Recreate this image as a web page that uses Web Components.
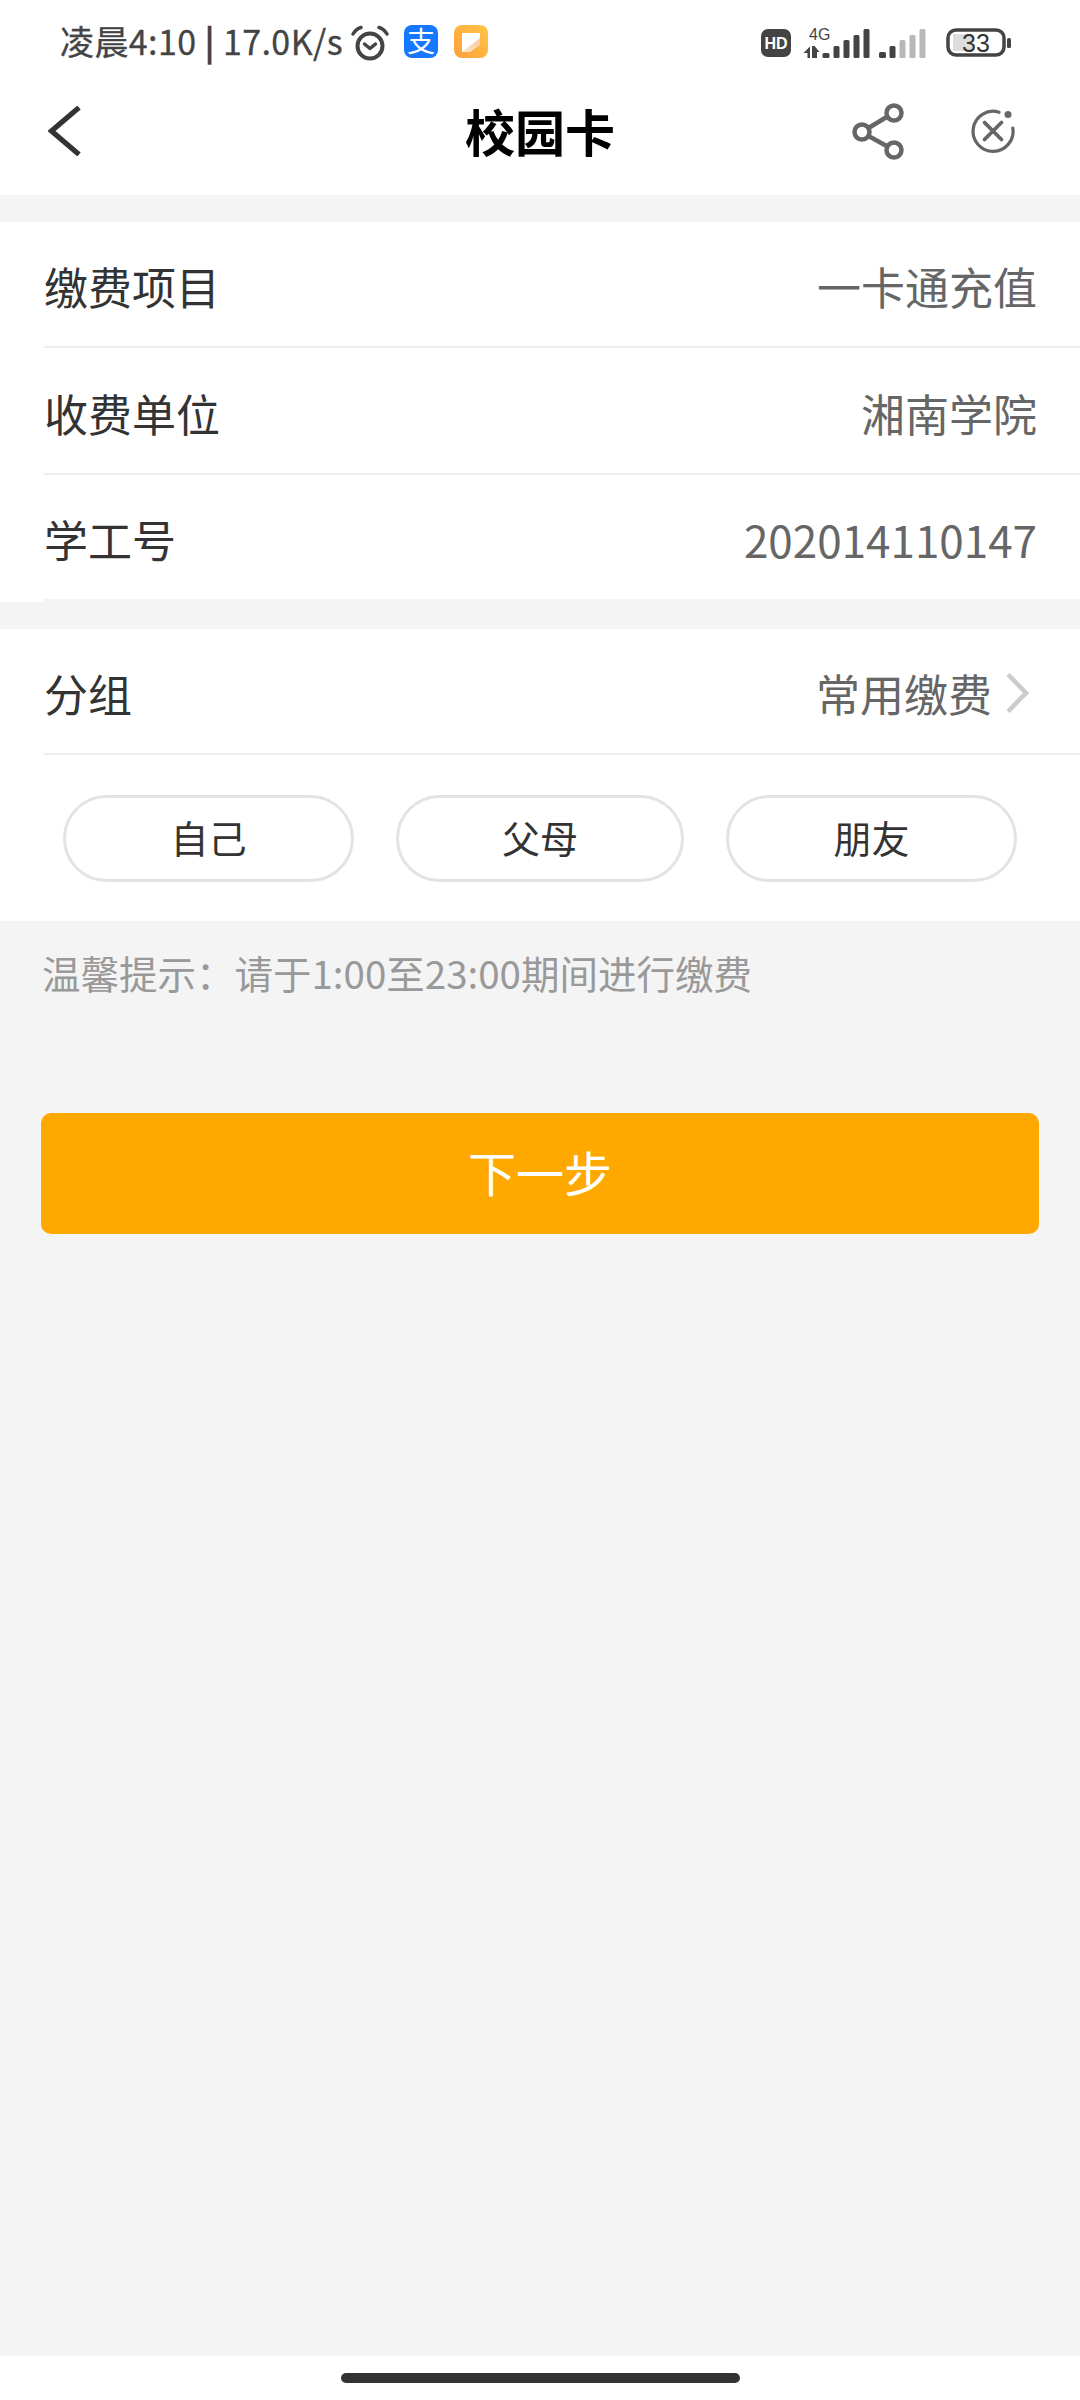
<!DOCTYPE html>
<html lang="zh-CN">
<head>
<meta charset="utf-8">
<title>校园卡</title>
<style>
  html, body { margin: 0; padding: 0; height: 100%; }
  body {
    width: 1080px;
    height: 2400px;
    display: flex;
    flex-direction: column;
    background: #f4f4f4;
    font-family: "Noto Sans CJK SC", "Noto Sans", sans-serif;
    overflow: hidden;
  }
</style>
</head>
<body>
  <status-bar></status-bar>
  <nav-bar>校园卡</nav-bar>

  <info-group>
    <info-row label="缴费项目" value="一卡通充值" height="126"></info-row>
    <info-row label="收费单位" value="湘南学院" height="127"></info-row>
    <info-row label="学工号" value="202014110147" height="127" last></info-row>
  </info-group>

  <info-group>
    <info-row label="分组" value="常用缴费" height="126" arrow></info-row>
    <pill-row>
      <pill-button>自己</pill-button>
      <pill-button>父母</pill-button>
      <pill-button>朋友</pill-button>
    </pill-row>
  </info-group>

  <hint-text>温馨提示：请于1:00至23:00期间进行缴费</hint-text>
  <next-button>下一步</next-button>
  <home-bar></home-bar>

<script>
  // status bar: clock, speed, notification icons, signal and battery
  class StatusBar extends HTMLElement {
    constructor() {
      super();
      this.attachShadow({ mode: 'open' });
    }

    connectedCallback() {
      this.shadowRoot.innerHTML = `
        <style>
          :host {
            display: flex;
            align-items: center;
            height: 73px;
            padding: 12px 68px 0 60px;
            box-sizing: border-box;
            background: #fff;
            color: #444;
          }
          .clock {
            font-size: 34px;
            letter-spacing: 0.4px;
            line-height: 40px;
            margin-top: -4px;
            white-space: nowrap;
            -webkit-text-stroke: 0.3px #444;
          }
          .clock b { font-weight: 700; }
          svg { display: block; flex: none; overflow: visible; }
          .alarm { margin-left: 8px; }
          .alipay {
            flex: none;
            width: 34px;
            height: 33px;
            margin: -2px 0 0 15px;
            border-radius: 8px;
            background: #1677ff;
            color: #fff;
            font-size: 28px;
            line-height: 31px;
            text-align: center;
          }
          .note { margin: -2px 0 0 16px; }
          .spacer { flex: 1; }
          .signal { margin-left: 12px; }
          .battery { margin-left: 19px; }
          .hd { flex: none; }
          text { font-family: "Liberation Sans", "Noto Sans", sans-serif; }
        </style>
        <span class="clock">凌晨4:10 <b>|</b> 17.0K/s</span>
        <svg class="alarm" width="38" height="36" viewBox="0 0 38 36" fill="none" stroke="#444" stroke-linecap="round">
          <circle cx="19" cy="21" r="12.500" stroke-width="4"/>
          <path d="M13.500 19l5.500 4.500 5.500-4.500" stroke-width="3.500" stroke-linejoin="round"/>
          <path d="M2 9C4 5.500 6.500 3.500 10 2.500M36 9C34 5.500 31.500 3.500 28 2.500" stroke-width="3.500"/>
        </svg>
        <div class="alipay">支</div>
        <svg class="note" width="34" height="33" viewBox="0 0 34 33">
          <defs>
            <linearGradient id="n" x1="0" y1="1" x2="1" y2="0">
              <stop offset="0" stop-color="#ffa03c"/>
              <stop offset="1" stop-color="#ffc545"/>
            </linearGradient>
            <linearGradient id="f" x1="0" y1="1" x2="1" y2="0">
              <stop offset="0" stop-color="#ffe9cc"/>
              <stop offset="1" stop-color="#f6c998"/>
            </linearGradient>
          </defs>
          <rect width="34" height="33" rx="8" fill="url(#n)"/>
          <path d="M8 8h18v11.500L16 27H8z" fill="#fff"/>
          <path d="M26 13v6.500L16 27H8z" fill="url(#f)"/>
        </svg>
        <div class="spacer"></div>
        <svg class="hd" width="30" height="28" viewBox="0 0 30 28">
          <rect width="30" height="28" rx="7" fill="#444"/>
          <text x="15" y="19.500" text-anchor="middle" font-size="16" font-weight="700" fill="#fff">HD</text>
        </svg>
        <svg class="signal" width="124" height="30" viewBox="804 27 124 30">
          <text x="810" y="38.500" font-size="16" fill="#444">4G</text>
          <path d="M811 45.500v11.500h-2.500v-5H804.500zM813 45h2.500l5 6h-2.500v6H813z" fill="#444"/>
          <g fill="#444">
            <rect x="823.500" y="52" width="7" height="5" rx="1.500"/>
            <rect x="834.500" y="45" width="6" height="12" rx="1.500"/>
            <rect x="844.500" y="39" width="6" height="18" rx="1.500"/>
            <rect x="854.500" y="34" width="6" height="23" rx="1.500"/>
            <rect x="864.500" y="28" width="6" height="29" rx="1.500"/>
            <rect x="880" y="51" width="7" height="6" rx="1.500"/>
            <rect x="890.500" y="45" width="6" height="12" rx="1.500"/>
          </g>
          <g fill="#b8b8b8">
            <rect x="900.500" y="39" width="6" height="18" rx="1.500"/>
            <rect x="910.500" y="34" width="6" height="23" rx="1.500"/>
            <rect x="920.500" y="28" width="6" height="29" rx="1.500"/>
          </g>
        </svg>
        <svg class="battery" width="66" height="30" viewBox="0 0 66 30">
          <rect x="7" y="6" width="19" height="17" fill="#ddd"/>
          <rect x="2" y="2" width="56" height="25" rx="8" fill="none" stroke="#444" stroke-width="3.500"/>
          <rect x="61" y="10" width="4" height="10" rx="1.500" fill="#444"/>
          <text x="30" y="23.500" text-anchor="middle" font-size="25" fill="#333">33</text>
        </svg>
      `;
    }
  }

  // title bar with back chevron and share / close actions
  class NavBar extends HTMLElement {
    constructor() {
      super();
      this.attachShadow({ mode: 'open' });
    }

    connectedCallback() {
      this.shadowRoot.innerHTML = `
        <style>
          :host {
            display: grid;
            grid-template-columns: 1fr auto 1fr;
            align-items: center;
            height: 122px;
            padding: 0 64px 0 48px;
            box-sizing: border-box;
            background: #fff;
          }
          .title {
            font-size: 50px;
            font-weight: 700;
            color: #000;
            line-height: 60px;
            margin: -8px 0 0 16px;
          }
          .actions {
            display: flex;
            justify-content: flex-end;
            align-items: center;
            gap: 66px;
            margin-top: -6px;
          }
          svg { display: block; }
          .back { margin-top: -6px; }
        </style>
        <div>
          <svg class="back" width="34" height="50" viewBox="0 0 34 50" fill="none" stroke="#333" stroke-width="5.200">
            <path d="M31 1.500L3.500 25 31 48.500"/>
          </svg>
        </div>
        <div class="title"><slot></slot></div>
        <div class="actions">
          <svg width="52" height="58" viewBox="0 0 52 58" fill="none" stroke="#666" stroke-width="4.500">
            <circle cx="10" cy="30" r="7.500"/>
            <circle cx="42" cy="11" r="7.500"/>
            <circle cx="42" cy="48" r="7.500"/>
            <path d="M16.500 26l19-11.500M16.500 34l19 10.500"/>
          </svg>
          <svg width="46" height="46" viewBox="0 0 46 46" fill="none" stroke="#666" stroke-linecap="round">
            <path d="M29 4.200A20 20 0 1 0 42.800 20" stroke-width="3.200"/>
            <path d="M14.500 14.500l17 17M31.500 14.500l-17 17" stroke-width="3.800"/>
            <circle cx="38" cy="6.500" r="3.500" fill="#666" stroke="none"/>
          </svg>
        </div>
      `;
    }
  }

  class InfoGroup extends HTMLElement {
    constructor() {
      super();
      this.attachShadow({ mode: 'open' });
    }

    connectedCallback() {
      this.shadowRoot.innerHTML = `
        <style>
          :host {
            display: block;
            margin-top: 27px;
            background: #fff;
          }
        </style>
        <slot></slot>
      `;
    }
  }

  // one label / value line; the divider starts at the text's left edge
  class InfoRow extends HTMLElement {
    constructor() {
      super();
      this.attachShadow({ mode: 'open' });
    }

    connectedCallback() {
      const label = this.getAttribute('label') || '';
      const value = this.getAttribute('value') || '';
      const height = this.getAttribute('height') || '126';
      const arrow = this.hasAttribute('arrow');
      const last = this.hasAttribute('last');
      this.shadowRoot.innerHTML = `
        <style>
          :host {
            display: block;
            padding-left: 44px;
          }
          .line {
            display: flex;
            align-items: center;
            justify-content: space-between;
            height: ${height}px;
            padding: 4px 43px 0 0;
            box-sizing: border-box;
            border-bottom: ${last ? 3 : 2}px solid ${last ? '#f4f4f4' : '#eeeeee'};
            font-size: 44px;
            line-height: 56px;
          }
          .label { color: #333; }
          .right { display: flex; align-items: center; color: #666; }
          svg { display: block; margin: 0 8px 0 13px; }
        </style>
        <div class="line">
          <span class="label">${label}</span>
          <span class="right">${value}${arrow ? `
            <svg width="24" height="40" viewBox="0 0 24 40" fill="none" stroke="#ccc" stroke-width="4.500">
              <path d="M3 1.500l18 18.500L3 38.500"/>
            </svg>` : ''}</span>
        </div>
      `;
    }
  }

  class PillRow extends HTMLElement {
    constructor() {
      super();
      this.attachShadow({ mode: 'open' });
    }

    connectedCallback() {
      this.shadowRoot.innerHTML = `
        <style>
          :host {
            display: grid;
            grid-template-columns: 291px 288px 291px;
            gap: 42px;
            padding: 40px 63px 39px;
          }
        </style>
        <slot></slot>
      `;
    }
  }

  class PillButton extends HTMLElement {
    constructor() {
      super();
      this.attachShadow({ mode: 'open' });
    }

    connectedCallback() {
      this.shadowRoot.innerHTML = `
        <style>
          :host {
            display: flex;
            align-items: center;
            justify-content: center;
            height: 87px;
            padding-bottom: 5px;
            box-sizing: border-box;
            border: 3px solid #e3e3e3;
            border-radius: 44px;
            background: #fff;
            color: #333;
            font-size: 38px;
          }
        </style>
        <slot></slot>
      `;
    }
  }

  class HintText extends HTMLElement {
    constructor() {
      super();
      this.attachShadow({ mode: 'open' });
    }

    connectedCallback() {
      this.shadowRoot.innerHTML = `
        <style>
          :host {
            display: block;
            padding: 26px 0 0 42px;
            height: 192px;
            box-sizing: border-box;
            color: #999;
            font-size: 38.500px;
            line-height: 50px;
          }
        </style>
        <slot></slot>
      `;
    }
  }

  class NextButton extends HTMLElement {
    constructor() {
      super();
      this.attachShadow({ mode: 'open' });
    }

    connectedCallback() {
      this.shadowRoot.innerHTML = `
        <style>
          :host {
            display: flex;
            align-items: center;
            justify-content: center;
            flex: none;
            height: 121px;
            padding-bottom: 5px;
            box-sizing: border-box;
            margin: 0 41px;
            border-radius: 10px;
            background: #ffa900;
            color: #fff;
            font-size: 48px;
          }
        </style>
        <slot></slot>
      `;
    }
  }

  // white strip at the bottom with the gesture handle
  class HomeBar extends HTMLElement {
    constructor() {
      super();
      this.attachShadow({ mode: 'open' });
    }

    connectedCallback() {
      this.shadowRoot.innerHTML = `
        <style>
          :host {
            display: flex;
            justify-content: center;
            height: 44px;
            margin-top: auto;
            padding-top: 17px;
            box-sizing: border-box;
            background: #fff;
          }
          .handle {
            width: 399px;
            height: 10px;
            border-radius: 5px;
            background: #333;
          }
        </style>
        <div class="handle"></div>
      `;
    }
  }

  customElements.define('status-bar', StatusBar);
  customElements.define('nav-bar', NavBar);
  customElements.define('info-group', InfoGroup);
  customElements.define('info-row', InfoRow);
  customElements.define('pill-row', PillRow);
  customElements.define('pill-button', PillButton);
  customElements.define('hint-text', HintText);
  customElements.define('next-button', NextButton);
  customElements.define('home-bar', HomeBar);
</script>
</body>
</html>
